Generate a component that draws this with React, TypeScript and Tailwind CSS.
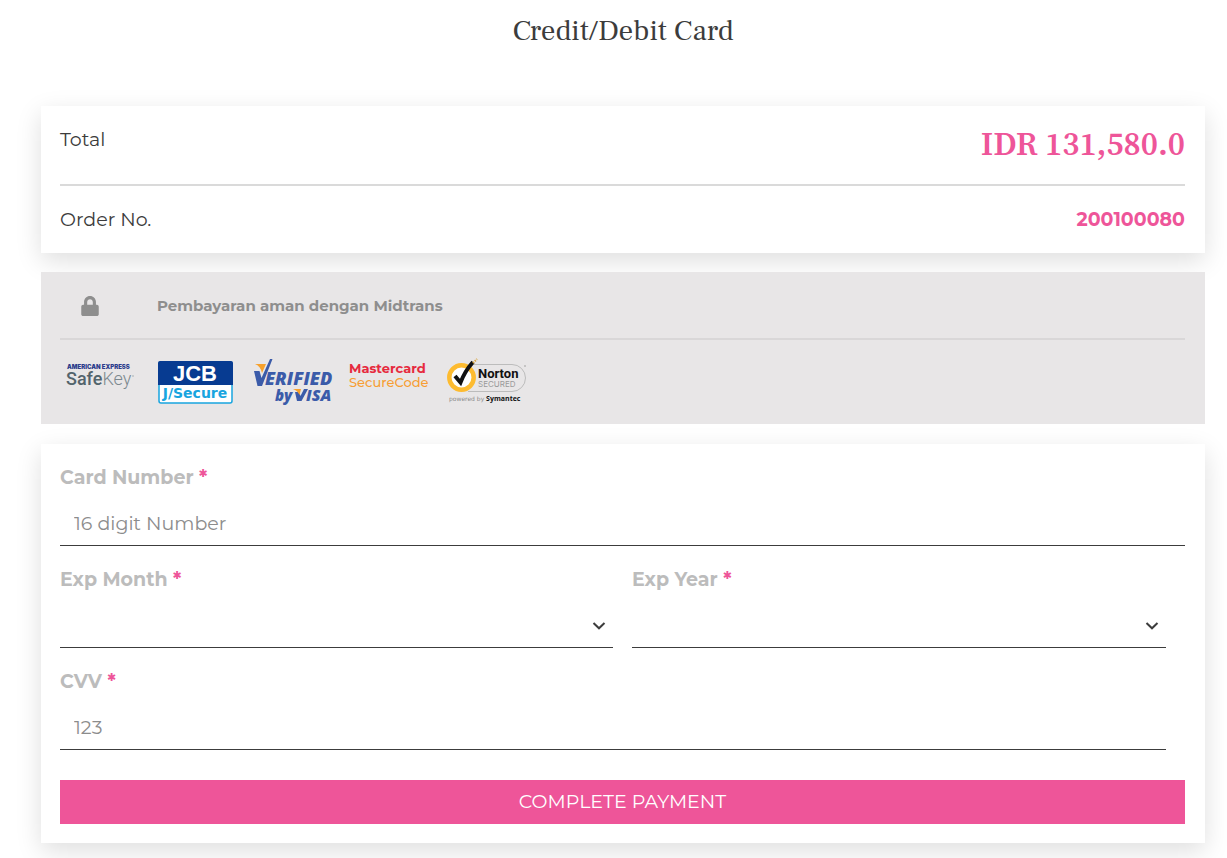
import { useState, type ReactNode } from 'react'

const months = ['01', '02', '03', '04', '05', '06', '07', '08', '09', '10', '11', '12']
const years = ['2020', '2021', '2022', '2023', '2024', '2025', '2026', '2027', '2028', '2029']

const inputClass =
  'block h-[54px] w-full border-b border-[#3c3c3c] bg-transparent px-3.5 pt-2.5 text-[19px] text-[#3c3c3c] placeholder:text-[#8c8c8c] outline-none'

function Field({ id, label, children }: { id: string; label: string; children: ReactNode }) {
  return (
    <div>
      <label htmlFor={id} className="block text-[19px] leading-7 font-bold text-[#bcbcbc]">
        {label} <span className="text-[#ee5599]">*</span>
      </label>
      {children}
    </div>
  )
}

function SelectField({ id, label, options }: { id: string; label: string; options: string[] }) {
  const [value, setValue] = useState('')
  return (
    <Field id={id} label={label}>
      <div className="relative">
        <select
          id={id}
          value={value}
          onChange={(e) => setValue(e.target.value)}
          className={`${inputClass} appearance-none`}
        >
          <option value="" />
          {options.map((o) => (
            <option key={o}>{o}</option>
          ))}
        </select>
        <svg
          viewBox="0 0 14 10"
          className="pointer-events-none absolute right-[7px] bottom-[17px] h-[10px] w-[14px]"
          fill="none"
          stroke="#3c3c3c"
          strokeWidth="2"
        >
          <path d="M1.5 2 L7 7.3 L12.5 2" />
        </svg>
      </div>
    </Field>
  )
}

function SafeKeyLogo() {
  return (
    <svg viewBox="0 0 80 48" className="h-12 w-20" role="img" aria-label="American Express SafeKey">
      <text x="7" y="11" fontSize="6" fontWeight="900" fontFamily="Inter, sans-serif" fill="#2c3c8c">
        AMERICAN EXPRESS
      </text>
      <text x="6" y="27" fontSize="18" fontFamily="Roboto, sans-serif" fill="#53646c">
        <tspan fontWeight="500">Safe</tspan>
        <tspan fontWeight="300" fill="#7c898f">Key</tspan>
      </text>
      <circle cx="73" cy="18" r="0.8" fill="#a0a8ac" />
    </svg>
  )
}

function JcbLogo() {
  return (
    <svg viewBox="0 0 80 48" className="h-12 w-20" role="img" aria-label="JCB J/Secure">
      <rect x="3" y="4" width="73" height="41" rx="2" fill="#fff" stroke="#18a5df" strokeWidth="1.5" />
      <path d="M2 27 V5 Q2 3 4 3 H75 Q77 3 77 5 V27 Z" fill="#073b91" />
      <text x="39" y="23" textAnchor="middle" fontSize="22" fontWeight="700" fontFamily="Liberation Sans, sans-serif" fill="#fff">
        JCB
      </text>
      <text x="39" y="40" textAnchor="middle" fontSize="14" fontWeight="700" fontFamily="DejaVu Sans, sans-serif" fill="#18a5df">
        J/Secure
      </text>
    </svg>
  )
}

function VerifiedByVisaLogo() {
  return (
    <svg viewBox="0 0 84 48" className="-mr-1 h-12 w-[84px]" role="img" aria-label="Verified by Visa">
      <path d="M2 13 H7.5 L9.5 20 L18 1 H20.5 L10 28 H5.5 Z" fill="#3b5ba9" />
      <path d="M3 6 H14 L10 15 Q8.5 8 3 6 Z" fill="#f7a12c" />
      <g fontFamily="Open Sans, sans-serif" fontStyle="italic" fontWeight="800" fill="#3b5ba9">
        <text x="13" y="27" fontSize="18">
          ERIFIED
        </text>
        <text x="23" y="43" fontSize="15">
          by
        </text>
        <text x="54" y="43" fontSize="16">
          ISA
        </text>
      </g>
      <path d="M43 34 H47 L48.5 38 L52 31 H56 L49.5 43 H45 Z" fill="#3b5ba9" />
      <path d="M41 31 H49 L47.5 37 Q45.5 32.5 41 31 Z" fill="#f7a12c" />
    </svg>
  )
}

function MastercardLogo() {
  return (
    <svg viewBox="0 0 80 48" className="h-12 w-20" role="img" aria-label="Mastercard SecureCode">
      <g fontFamily="Montserrat, Lato, sans-serif" fontSize="13">
        <text x="1" y="15" fontWeight="700" fill="#e62a3e">
          Mastercard
        </text>
        <text x="1" y="29" fontWeight="500" fill="#f79e34">
          SecureCode
        </text>
      </g>
    </svg>
  )
}

function NortonLogo() {
  return (
    <svg viewBox="0 0 84 48" className="h-12 w-[84px]" role="img" aria-label="Norton Secured, powered by Symantec">
      <path d="M26 6.5 H68 A13.5 13.5 0 0 1 68 33.5 H24" fill="none" stroke="#bcbcbc" />
      <circle cx="17.5" cy="19.5" r="12.2" fill="#fff" stroke="#fdbb30" strokeWidth="4.5" />
      <path d="M11 18 L16.5 24.5 Q21 13 29 4" fill="none" stroke="#111" strokeWidth="4" />
      <path d="M29 5 L33 1" stroke="#d9a441" strokeWidth="2" strokeDasharray="1.5 1" />
      <text x="34" y="20" fontSize="13" fontWeight="700" fontFamily="Roboto, sans-serif" fill="#111">
        Norton
      </text>
      <text x="34" y="29" fontSize="8" fontFamily="Inter, sans-serif" fill="#9a9a9a">
        SECURED
      </text>
      <circle cx="81" cy="8" r="0.8" fill="#999" />
      <text x="5" y="43" fontSize="6" fontFamily="DejaVu Sans, sans-serif" fill="#8c8c8c">
        powered by{' '}
        <tspan fontWeight="700" fontFamily="Open Sans, sans-serif" fontSize="7" fill="#111">
          Symantec
        </tspan>
      </text>
    </svg>
  )
}

export default function App() {
  return (
    <main className="bg-white pr-[22px] pb-[15px] pl-[41px] font-[Montserrat,Inter,sans-serif] text-[#3c3c3c]">
      <h1 className="pt-[11px] text-center font-['Frank_Ruhl_Libre','Liberation_Serif',serif] text-[29px] leading-10">
        Credit/Debit Card
      </h1>

      <section className="mt-[55px] bg-white pt-[18px] pr-5 pb-[19px] pl-[19px] text-[19px] shadow-[0_8px_24px_rgba(0,0,0,0.13)]">
        <div className="flex items-start justify-between border-b-2 border-[#dadada] pb-5">
          <span className="leading-8">Total</span>
          <span className="font-['Source_Serif_4','Source_Serif_Pro',Lora,'Liberation_Serif',serif] text-[33px] leading-10 font-semibold text-[#ee5599]">
            IDR 131,580.0
          </span>
        </div>
        <div className="flex justify-between pt-5 leading-7">
          <span>Order No.</span>
          <span className="font-bold text-[#ee5599]">200100080</span>
        </div>
      </section>

      <section className="mt-[19px] bg-[#e8e6e7] pr-5 pb-[18px] pl-[19px]">
        <div className="flex items-center border-b-2 border-[#d9d7d8] pt-5 pb-[18px] pl-[21px] leading-7">
          <svg viewBox="0 0 448 512" className="h-5 w-[18px]" fill="#8e8e8e" aria-hidden="true">
            <path d="M400 224h-24v-72C376 68.2 307.8 0 224 0S72 68.2 72 152v72H48c-26.5 0-48 21.5-48 48v192c0 26.5 21.5 48 48 48h352c26.5 0 48-21.5 48-48V272c0-26.5-21.5-48-48-48zm-104 0H152v-72c0-39.7 32.3-72 72-72s72 32.3 72 72v72z" />
          </svg>
          <p className="ml-[58px] text-[15px] font-bold text-[#8e8e8e]">Pembayaran aman dengan Midtrans</p>
        </div>
        <div className="mt-[18px] flex flex-wrap gap-4">
          <SafeKeyLogo />
          <JcbLogo />
          <VerifiedByVisaLogo />
          <MastercardLogo />
          <NortonLogo />
        </div>
      </section>

      <form
        onSubmit={(e) => e.preventDefault()}
        className="mt-5 bg-white pt-5 pr-5 pb-[19px] pl-[19px] shadow-[0_8px_24px_rgba(0,0,0,0.13)]"
      >
        <div className="flex flex-col gap-5">
          <Field id="card-number" label="Card Number">
            <input id="card-number" inputMode="numeric" placeholder="16 digit Number" className={inputClass} />
          </Field>
          <div className="grid grid-cols-2 gap-[19px]">
            <SelectField id="exp-month" label="Exp Month" options={months} />
            <div className="pr-[19px]">
              <SelectField id="exp-year" label="Exp Year" options={years} />
            </div>
          </div>
          <div className="pr-[19px]">
            <Field id="cvv" label="CVV">
              <input id="cvv" inputMode="numeric" placeholder="123" className={inputClass} />
            </Field>
          </div>
        </div>
        <button type="submit" className="mt-[30px] h-11 w-full bg-[#ee5599] text-[19px] text-white">
          COMPLETE PAYMENT
        </button>
      </form>
    </main>
  )
}
